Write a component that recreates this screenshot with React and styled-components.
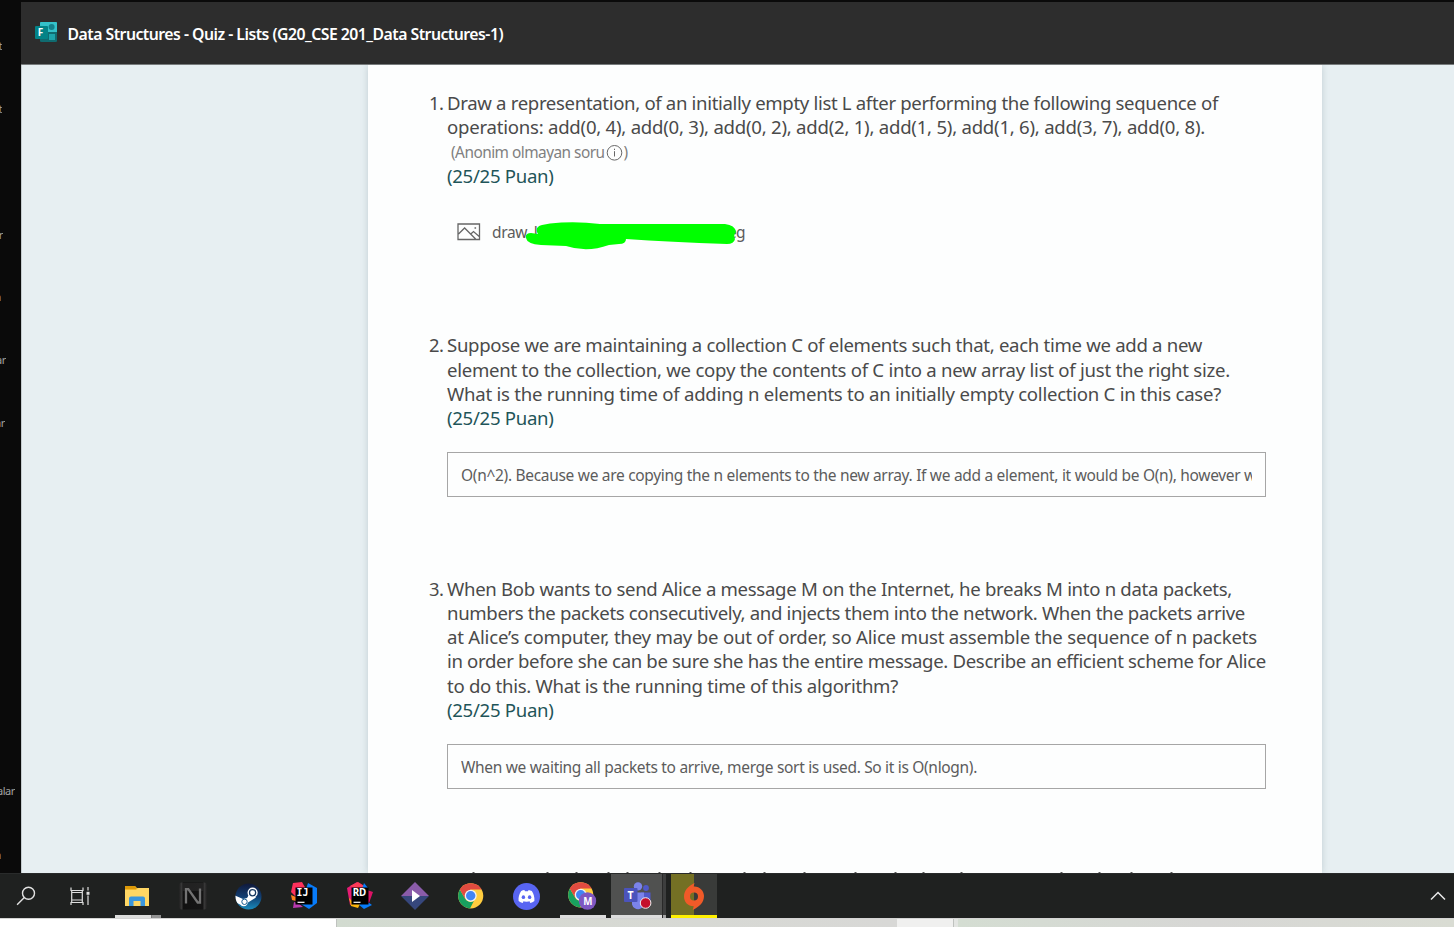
import React, { useLayoutEffect, useRef } from "react";
import styled, { createGlobalStyle } from "styled-components";

const GlobalStyle = createGlobalStyle`
  * { box-sizing: border-box; }
  html, body { margin: 0; height: 100%; overflow: hidden; background: #fff; }
  body { font-family: "Noto Sans", "Open Sans", sans-serif; }
  svg { display: block; }
`;

const Screen = styled.div`
  width: 1454px;
  height: 927px;
  display: flex;
  flex-direction: column;
  overflow: hidden;
`;
const Workspace = styled.div`
  height: 873px;
  flex: none;
  display: flex;
  background: #0a0a0a;
`;
const Rail = styled.aside`
  width: 21px;
  flex: none;
  display: flex;
  flex-direction: column;
  overflow: hidden;
  color: #a2a2a2;
  font-size: 11px;
  line-height: 16px;
  letter-spacing: -0.4px;
  padding-top: 38px;
`;
const RailLabel = styled.span`
  width: ${(p) => p.$w}px;
  height: 16px;
  margin-bottom: ${(p) => p.$gap}px;
  flex: none;
  display: flex;
  justify-content: flex-end;
  overflow: hidden;
  white-space: nowrap;
`;
const Main = styled.main`
  flex: 1;
  min-width: 0;
  display: flex;
  flex-direction: column;
  padding-top: 2px;
`;
const Header = styled.header`
  height: 63px;
  flex: none;
  display: flex;
  align-items: center;
  gap: 10.5px;
  padding: 0 0 2px 14px;
  background: #2d2d2d;
  border-bottom: 1px solid #777b7c;
`;
const Title = styled.h1`
  margin: 0;
  padding-top: 4px;
  color: #fff;
  font-size: 15.8px;
  font-weight: 600;
  line-height: 22px;
`;
const Backdrop = styled.section`
  flex: 1;
  min-height: 0;
  overflow: hidden;
  background: #e7eff2;
  border-left: 1px solid #c5cccf;
  padding-left: 346px;
`;
const Sheet = styled.article`
  width: 954px;
  height: 808px;
  display: flex;
  flex-direction: column;
  padding: 25.6px 56px 0 61px;
  background: #fdfefe;
  box-shadow: 0 0 7px rgba(60, 90, 100, 0.22);
`;
const Question = styled.section`
  height: ${(p) => p.$h}px;
  flex: none;
  display: flex;
`;
const Num = styled.span`
  width: 18px;
  flex: none;
  font-size: 18.4px;
  line-height: 24.25px;
  letter-spacing: -0.6px;
  color: #4a4a4a;
`;
const Body = styled.div`
  display: flex;
  flex-direction: column;
`;
const Line = styled.div`
  height: 24.25px;
  font-size: 18.6px;
  line-height: 24.25px;
  white-space: nowrap;
  color: ${(p) => (p.$points ? "#1f5559" : "#4a4a4a")};
`;
const Note = styled.div`
  height: 24.7px;
  display: flex;
  align-items: center;
  gap: 1px;
  padding: 3px 0 0 4px;
  font-size: 15.4px;
  line-height: 22px;
  color: #808080;
`;
const Answer = styled.div`
  width: 819px;
  height: 45px;
  margin-top: 21.7px;
  padding: 2px 13px 0 13px;
  display: flex;
  align-items: center;
  border: 1px solid #a6a6a6;
  color: #5c5c5c;
  font-size: 15.5px;
  white-space: nowrap;
`;
const AnswerText = styled.div`
  flex: 1;
  min-width: 0;
  overflow: hidden;
`;
const FileRow = styled.div`
  position: relative;
  width: 300px;
  height: 30px;
  margin-top: 29px;
  padding-left: 10px;
  display: flex;
  align-items: center;
  color: #5c5c5c;
  font-size: 15.5px;
`;
const FileName = styled.div`
  width: 253px;
  margin-left: 11px;
  display: flex;
  justify-content: space-between;
`;
const Marker = styled.svg`
  position: absolute;
  left: 76px;
  top: 5px;
`;
const NextLine = styled.svg`
  margin-top: auto;
`;
const Taskbar = styled.footer`
  height: 45px;
  flex: none;
  display: flex;
  background: #1f2120;
  border-top: 1px solid #292b2b;
  padding-left: 3px;
`;
const Task = styled.div`
  width: ${(p) => p.$w || 46}px;
  height: 44px;
  margin-right: ${(p) => p.$gap ?? 9.7}px;
  padding-left: ${(p) => p.$shift || 0}px;
  flex: none;
  display: flex;
  align-items: center;
  justify-content: center;
  background: ${(p) => p.$bg || "transparent"};
  box-shadow: ${(p) => (p.$line ? `inset 0 -3px ${p.$line}` : "none")};
`;
const Stack = styled.div`
  width: 4px;
  height: 44px;
  flex: none;
  margin-right: 5px;
  background: #3d3e3e;
  border-left: 1px solid #292929;
  box-shadow: inset 0 -3px #a5a5a5;
`;
const FolderStack = styled.div`
  width: 10px;
  height: 3px;
  align-self: flex-end;
  flex: none;
  margin-right: 10px;
  background: #929292;
  border-left: 1px solid #777;
`;
const TrayCaret = styled.div`
  margin-left: auto;
  width: 32px;
  display: flex;
  align-items: center;
  justify-content: center;
`;
const Below = styled.div`
  height: 9px;
  flex: none;
  display: flex;
  border-top: 1px solid #d4d4d4;
`;
const Strip = styled.div`
  width: ${(p) => p.$w}px;
  flex: none;
  background: ${(p) => p.$bg};
  border-right: ${(p) => (p.$edge ? "1px solid #bfc2bf" : "0")};
`;
const IconText = styled.text`
  font-family: "Noto Sans", sans-serif;
  font-weight: 700;
  fill: #fff;
`;
const MonoIconText = styled(IconText)`
  font-family: "DejaVu Sans Mono", monospace;
`;

/* Spreads a single line of text over a fixed measure. */
const FitText = styled.span`
  display: inline-block;
  white-space: nowrap;
`;
function Fit({ w, children }) {
  const ref = useRef(null);
  useLayoutEffect(() => {
    const el = ref.current;
    el.style.letterSpacing = "0px";
    const natural = el.getBoundingClientRect().width;
    el.style.letterSpacing = `${(w - natural) / el.textContent.length}px`;
  }, [w, children]);
  return <FitText ref={ref}>{children}</FitText>;
}

const FormsIcon = () => (
  <svg width="22" height="21" viewBox="0 0 22 21">
    <rect x="5" y="0" width="17" height="20" rx="1.3" fill="#106b70" />
    <path d="M6 0h15a1 1 0 0 1 1 1v9H5V1a1 1 0 0 1 1-1Z" fill="#34c1c9" />
    <circle cx="16.6" cy="5" r="3" fill="#14808a" />
    <rect x="14" y="12" width="6" height="6" fill="#1da4ab" />
    <rect x="0" y="4" width="13" height="13" rx="1" fill="#038387" />
    <IconText x="2.8" y="14" fontSize="10">F</IconText>
  </svg>
);
const InfoIcon = () => (
  <svg width="17" height="17" viewBox="0 0 17 17" fill="none" stroke="#666">
    <circle cx="8.5" cy="8.8" r="7.3" />
    <path d="M8.5 7.2v5.3M8.5 4.7v1.3" />
  </svg>
);
const ImageIcon = () => (
  <svg width="24" height="18" viewBox="0 0 24 18" fill="none" stroke="#666" strokeWidth="1.3">
    <path d="M1 1h21.5v15.5H1ZM1.5 11 7.6 5l11 11M13.5 11.2l3-2.7 6 5.3" />
    <path d="M17.5 5h1.6" strokeWidth="1.5" />
  </svg>
);
const SearchIcon = () => (
  <svg width="20" height="20" viewBox="0 0 20 20" fill="none" stroke="#e2e2e2" strokeWidth="1.4">
    <circle cx="12.5" cy="7.2" r="6" />
    <path d="m8.3 11.5-7.2 7.2" />
  </svg>
);
const TaskViewIcon = () => (
  <svg width="20" height="20" viewBox="0 0 20 20" fill="none" stroke="#dedede" strokeWidth="1.2">
    <path d="M1 1.5v3h12v-3M1.7 4.5v12M12.3 4.5v12M1.7 6.5h10.6M1.7 14h10.6M1 19v-2.5h12V19M18 1v3.6M18 9.5V19" />
    <path d="M18 5.8v3" strokeWidth="3" />
  </svg>
);
const FolderIcon = () => (
  <svg width="26" height="22" viewBox="0 0 26 22">
    <path d="M1 1h10l2 2h12v18H1Z" fill="#f3b72a" />
    <path d="M1 1h10l1.5 3H1Z" fill="#dc9909" />
    <path d="M1 5h11l2-2h11v18H1Z" fill="#ffd764" />
    <path d="M5 21v-7.5a2 2 0 0 1 2-2h12a2 2 0 0 1 2 2V21h-4.5v-5h-7v5Z" fill="#3a96dd" />
  </svg>
);
const NIcon = () => (
  <svg width="28" height="28" viewBox="0 0 28 28">
    <defs>
      <linearGradient id="n-side">
        <stop offset="0" stopColor="#202020" />
        <stop offset=".1" stopColor="#3a3a3a" />
        <stop offset=".15" stopColor="#111" />
        <stop offset=".85" stopColor="#151515" />
        <stop offset=".9" stopColor="#3a3a3a" />
        <stop offset="1" stopColor="#202020" />
      </linearGradient>
    </defs>
    <rect x="0" y="0.5" width="28" height="27" rx="3" fill="url(#n-side)" />
    <rect x="3" y="1" width="22" height="8" fill="#292929" opacity=".7" />
    <path d="M7 21.5V7.2h2.3l9.4 13.3H21V6.5" fill="none" stroke="#737373" strokeWidth="2.3" />
  </svg>
);
const SteamIcon = () => (
  <svg width="27" height="27" viewBox="0 0 27 27">
    <defs>
      <linearGradient id="steam" x1="0" y1="0" x2="0" y2="1">
        <stop offset="0" stopColor="#10193a" />
        <stop offset=".5" stopColor="#123d70" />
        <stop offset="1" stopColor="#198bbd" />
      </linearGradient>
      <clipPath id="steam-clip"><circle cx="13.5" cy="13.5" r="13" /></clipPath>
    </defs>
    <circle cx="13.5" cy="13.5" r="13" fill="url(#steam)" />
    <g clipPath="url(#steam-clip)">
      <path d="M0 12.5 8 16l4-1 3-5 6 4.5-8 5-1 2.2a4 4 0 0 1-6.5 0L0 19Z" fill="#fff" />
      <circle cx="17.6" cy="9.7" r="5.1" fill="#fff" />
      <circle cx="17.6" cy="9.7" r="3.1" fill="#fff" stroke="#163860" strokeWidth="1.3" />
      <circle cx="9.5" cy="18.8" r="2.7" fill="none" stroke="#1a5d91" strokeWidth="1" />
    </g>
  </svg>
);
const IdeaIcon = () => (
  <svg width="28" height="28" viewBox="0 0 28 28">
    <path d="M3 1 12 0l4 7L6 15 1 10Z" fill="#fe315d" />
    <path d="m18 1 9 5v15l-8 6-8-5Z" fill="#087cfa" />
    <path d="m1 13 5 2v4l-4-1Z" fill="#fc801d" />
    <path d="m4 20 4 1 5 4-10 1Z" fill="#b83aaf" />
    <path d="M5.5 5.5h17v17h-17Z" fill="#000" />
    <MonoIconText x="6.6" y="14" fontSize="9.8">IJ</MonoIconText>
    <path d="M7.5 20.3h7" stroke="#fff" strokeWidth="1.2" />
  </svg>
);
const RiderIcon = () => (
  <svg width="28" height="28" viewBox="0 0 28 28">
    <path d="m1 6 10-6 8 5-5 17-10 1Z" fill="#e61c73" />
    <path d="m4 4 8-4 8 5-4 5Z" fill="#fb3b57" />
    <path d="m18 1 4 5-1 6-5-5ZM12 22l7-4 7 5-8 4Z" fill="#087cfa" />
    <path d="m21 8 6 2-4 11-5-4Z" fill="#dd1265" />
    <path d="m3 16 5 5 6 1-2 4-7-2Z" fill="#fdb60d" />
    <path d="M5.5 5.5h17v17h-17Z" fill="#000" />
    <IconText x="6.7" y="14" fontSize="9.8">RD</IconText>
    <path d="M7.5 20.3h7" stroke="#fff" strokeWidth="1.2" />
  </svg>
);
const DiamondIcon = () => (
  <svg width="28" height="28" viewBox="0 0 28 28">
    <path d="M14 0 28 14H0Z" fill="#8a5ca9" />
    <path d="M0 14h28L14 28Z" fill="#36477c" />
    <path d="m11 8 8 6-8 6Z" fill="#fff" />
  </svg>
);
const ChromeArt = () => (
  <>
    <circle cx="12.7" cy="12.8" r="12.6" fill="#ffcd3f" />
    <path d="M12 25.4A12.6 12.6 0 0 1 1.8 6.5L7.3 16a6.2 6.2 0 0 0 8.6 2.1Z" fill="#18a05f" />
    <path d="M1.8 6.5a12.6 12.6 0 0 1 21.9 0H12.7L7.3 16Z" fill="#e14b40" />
    <circle cx="12.7" cy="12.8" r="6" fill="#f1f4f5" />
    <circle cx="12.7" cy="12.8" r="4.7" fill="#4285f4" />
  </>
);
const ChromeIcon = () => (
  <svg width="26" height="26" viewBox="0 0 26 26"><ChromeArt /></svg>
);
const ChromeProfileIcon = () => (
  <svg width="29" height="28" viewBox="0 0 29 28">
    <ChromeArt />
    <circle cx="19.5" cy="19" r="8.7" fill="#7e57c2" />
    <IconText x="15.3" y="22.7" fontSize="9.8">M</IconText>
  </svg>
);
const DiscordIcon = () => (
  <svg width="27" height="27" viewBox="0 0 27 27">
    <circle cx="13.5" cy="13.5" r="13.5" fill="#5865f2" />
    <path d="M8.2 8.1c1.1-.6 2.2-.9 3.2-1l.6 1.1h3l.6-1.1c1.1.2 2.2.5 3.2 1 2 2.9 2.9 6.2 2.6 10-1.3 1-2.6 1.6-4 2l-1-1.6 1.3-.7c-2.8 1.2-5.7 1.2-8.4 0l1.3.7-1 1.6c-1.4-.4-2.7-1-4-2-.4-3.8.6-7.1 2.6-10Z" fill="#fff" />
    <ellipse cx="10.4" cy="14.2" rx="1.7" ry="1.9" fill="#5865f2" />
    <ellipse cx="16.6" cy="14.2" rx="1.7" ry="1.9" fill="#5865f2" />
  </svg>
);
const TeamsIcon = () => (
  <svg width="28" height="28" viewBox="0 0 28 28">
    <circle cx="22" cy="6" r="2.9" fill="#5059c9" />
    <circle cx="14" cy="4.4" r="4.2" fill="#7b83eb" />
    <path d="M17 10.5h9.5v9a5 5 0 0 1-9.5 1Z" fill="#5059c9" />
    <path d="M8 10.5h12v9a6 6 0 0 1-12 3Z" fill="#7b83eb" />
    <rect x="0" y="6" width="13.5" height="14" rx="1" fill="#4b53bc" />
    <IconText x="3.4" y="16.7" fontSize="10.5">T</IconText>
    <circle cx="21.6" cy="21" r="5.3" fill="#c50f2b" stroke="#f0eeee" strokeWidth="1" />
  </svg>
);
const OriginIcon = () => (
  <svg width="22" height="27" viewBox="0 0 22 27">
    <path fillRule="evenodd" d="M11.5 0 10.6 3.4C16.5 3 21 7.7 21 13c0 6.5-4.5 10.6-11.3 14l1-3.7C4.8 23.3 1 18.8 1 13.5 1 7.1 5.5 3.3 11.5 0ZM11 9.5a4 4 0 1 0 0 8 4 4 0 0 0 0-8Z" fill="#f05a28" />
  </svg>
);

const RAIL = [
  { t: "t", w: 2, gap: 47 },
  { t: "t", w: 2, gap: 110 },
  { t: "r", w: 3, gap: 46 },
  { t: "n", w: 1, gap: 47 },
  { t: "ar", w: 6, gap: 47 },
  { t: "ar", w: 5, gap: 352 },
  { t: "alar", w: 15, gap: 48 },
  { t: "n", w: 1, gap: 0 },
];
const TICKS = [473, 547, 576, 608, 627, 659, 690, 744, 764, 804, 855, 895, 923, 961, 1061, 1099, 1131, 1171];

const QUESTIONS = [
  {
    h: 242.7,
    lines: [
      ["Draw a representation, of an initially empty list L after performing the following sequence of", 771],
      ["operations: add(0, 4), add(0, 3), add(0, 2), add(2, 1), add(1, 5), add(1, 6), add(3, 7), add(0, 8).", 758],
    ],
    file: true,
  },
  {
    h: 243.3,
    lines: [
      ["Suppose we are maintaining a collection C of elements such that, each time we add a new", 755],
      ["element to the collection, we copy the contents of C into a new array list of just the right size.", 783],
      ["What is the running time of adding n elements to an initially empty collection C in this case?", 774],
    ],
    answer: ["O(n^2). Because we are copying the n elements to the new array. If we add a element, it would be O(n), however w", 795],
  },
  {
    h: 230,
    lines: [
      ["When Bob wants to send Alice a message M on the Internet, he breaks M into n data packets,", 785],
      ["numbers the packets consecutively, and injects them into the network. When the packets arrive", 798],
      ["at Alice’s computer, they may be out of order, so Alice must assemble the sequence of n packets", 810],
      ["in order before she can be sure she has the entire message. Describe an efficient scheme for Alice", 819],
      ["to do this. What is the running time of this algorithm?", 451],
    ],
    answer: ["When we waiting all packets to arrive, merge sort is used. So it is O(nlogn).", 516],
  },
];

export default function App() {
  return (
    <Screen>
      <GlobalStyle />
      <Workspace>
        <Rail>
          {RAIL.map((r, i) => (
            <RailLabel key={i} $w={r.w} $gap={r.gap}>{r.t}</RailLabel>
          ))}
        </Rail>
        <Main>
          <Header>
            <FormsIcon />
            <Title><Fit w={435.5}>Data Structures - Quiz - Lists (G20_CSE 201_Data Structures-1)</Fit></Title>
          </Header>
          <Backdrop>
            <Sheet>
              {QUESTIONS.map((q, i) => (
                <Question key={i} $h={q.h}>
                  <Num>{i + 1}.</Num>
                  <Body>
                    {q.lines.map(([t, w]) => (
                      <Line key={t}><Fit w={w}>{t}</Fit></Line>
                    ))}
                    {q.file && (
                      <Note><Fit w={153.5}>(Anonim olmayan soru</Fit><InfoIcon />)</Note>
                    )}
                    <Line $points><Fit w={106.5}>(25/25 Puan)</Fit></Line>
                    {q.file && (
                      <FileRow>
                        <ImageIcon />
                        <FileName>
                          <Fit w={49}>draw_lı</Fit>
                          <Fit w={17}>eg</Fit>
                        </FileName>
                        <Marker width="214" height="28" viewBox="0 0 214 28">
                          <path d="M27 1.5Q52-1 77 2L202 2Q212 3 213 10Q210 13 212 17Q211 22 204 22Q147 20 103 17Q103 22 96 22L86 23Q64 31 43 24L18 23Q4 22 3 16Q2 11 8 11L15 12Q11 5 19 3Z" fill="#0f0" />
                        </Marker>
                      </FileRow>
                    )}
                    {q.answer && (
                      <Answer><AnswerText><Fit w={q.answer[1]}>{q.answer[0]}</Fit></AnswerText></Answer>
                    )}
                  </Body>
                </Question>
              ))}
              <NextLine width="837" height="2" viewBox="429 0 837 2">
                {TICKS.map((x) => <rect key={x} x={x - 0.5} y="1" width="2" height="1" fill="#555" />)}
              </NextLine>
            </Sheet>
          </Backdrop>
        </Main>
      </Workspace>
      <Taskbar>
        <Task><SearchIcon /></Task>
        <Task $w={42} $gap={14}><TaskViewIcon /></Task>
        <Task $w={36} $gap={0} $shift={8} $line="#dcdcdc"><FolderIcon /></Task>
        <FolderStack />
        <Task $w={45}><NIcon /></Task>
        <Task><SteamIcon /></Task>
        <Task><IdeaIcon /></Task>
        <Task><RiderIcon /></Task>
        <Task><DiamondIcon /></Task>
        <Task><ChromeIcon /></Task>
        <Task $gap={10}><DiscordIcon /></Task>
        <Task $gap={5} $line="#dcdcdc"><ChromeProfileIcon /></Task>
        <Task $w={51} $gap={0} $shift={3} $bg="#505150" $line="#dcdcdc"><TeamsIcon /></Task>
        <Stack />
        <Task $gap={0} $bg="linear-gradient(90deg, #747024 50%, #393b39 50%)" $line="#fff000"><OriginIcon /></Task>
        <TrayCaret>
          <svg width="16" height="10" viewBox="0 0 16 10" fill="none" stroke="#e8e8e8" strokeWidth="1.5">
            <path d="m1 8.5 7-7 7 7" />
          </svg>
        </TrayCaret>
      </Taskbar>
      <Below>
        <Strip $w={337} $bg="#fff" $edge />
        <Strip $w={560} $bg="linear-gradient(90deg, #d2dbd0, #d6d9d2 30%, #d8d8d6)" />
        <Strip $w={57} $bg="#f0f0ef" $edge />
        <Strip $w={4} $bg="#e3e5e2" />
        <Strip $w={496} $bg="linear-gradient(90deg, #d4ddd2, #d7d7d5 50%, #d9dcd3)" />
      </Below>
    </Screen>
  );
}
